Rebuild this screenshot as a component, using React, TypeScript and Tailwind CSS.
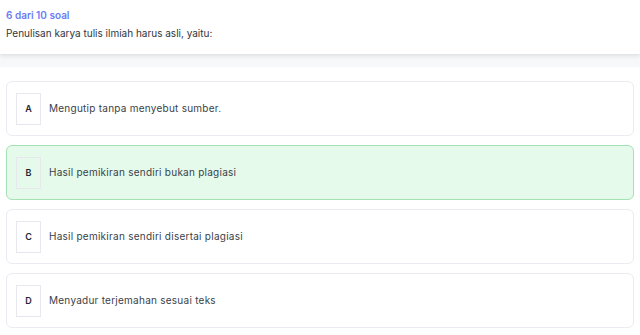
import React from "react";

const options = [
  { key: "A", text: "Mengutip tanpa menyebut sumber.", selected: false },
  { key: "B", text: "Hasil pemikiran sendiri bukan plagiasi", selected: true },
  { key: "C", text: "Hasil pemikiran sendiri disertai plagiasi", selected: false },
  { key: "D", text: "Menyadur terjemahan sesuai teks", selected: false },
];

export default function App() {
  return (
    <div
      className="w-[640px] h-[335px] overflow-hidden bg-white"
      style={{ fontFamily: "Inter, 'Noto Sans', sans-serif" }}
    >
      {/* Question header */}
      <div className="relative z-10 h-[54px] bg-white px-[6px] pt-[8px] shadow-[0_2px_4px_rgba(0,0,0,0.10)]">
        <p className="text-[10px] leading-[14px] font-semibold text-[#6b7cf5]">6 dari 10 soal</p>
        <p className="mt-[4px] text-[10px] leading-[14px] text-[#2f3640]">
          Penulisan karya tulis ilmiah harus asli, yaitu:
        </p>
      </div>
      <div className="h-[13px] bg-[#f7f8fa]" />

      {/* Answer options */}
      <div className="flex flex-col gap-[9px] px-[6px] pt-[14px]">
        {options.map((o) => (
          <div
            key={o.key}
            className={
              o.selected
                ? "flex h-[55px] items-center gap-[8px] rounded-[6px] border border-[#a4e2b3] bg-[#e5faeb] pl-[9px]"
                : "flex h-[55px] items-center gap-[8px] rounded-[6px] border border-[#ebecf2] bg-white pl-[9px]"
            }
          >
            <div className="flex h-[32px] w-[25px] items-center justify-center border border-[#e6e8ee] text-[9px] font-semibold text-[#1f2430]">
              {o.key}
            </div>
            <span className="text-[10px] tracking-[0.25px] text-[#3a3f4a]">{o.text}</span>
          </div>
        ))}
      </div>
    </div>
  );
}
